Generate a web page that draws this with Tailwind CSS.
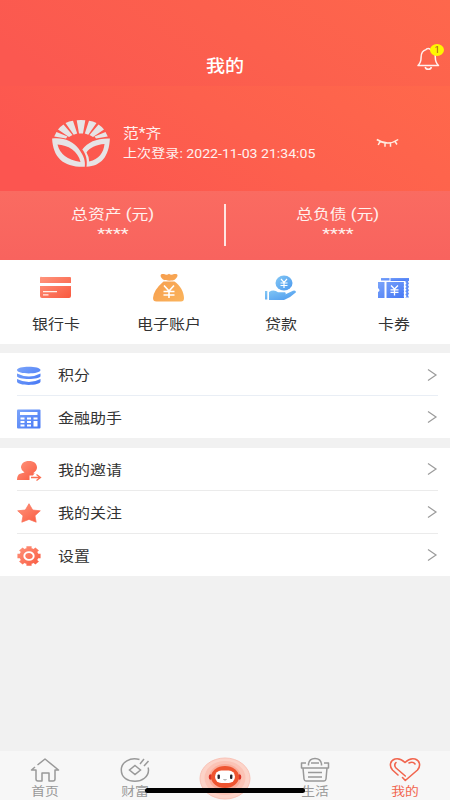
<!DOCTYPE html>
<html lang="zh-CN">
<head>
<meta charset="utf-8">
<title>我的</title>
<script src="https://cdn.jsdelivr.net/npm/@tailwindcss/browser@4"></script>
</head>
<body class="w-[450px] h-[800px] overflow-hidden bg-[#f1f1f1] text-[#333] font-['Roboto','Noto_Sans_CJK_SC',sans-serif] text-[14px] leading-5">
<svg class="absolute w-0 h-0"><defs>
<linearGradient id="red" x1="0" y1="0" x2="1" y2="1"><stop stop-color="#ff957d"/><stop offset="1" stop-color="#f9593f"/></linearGradient>
<linearGradient id="gold" x1="0" y1="0" x2="1" y2="1"><stop stop-color="#f59b4c"/><stop offset="1" stop-color="#fbb45c"/></linearGradient>
<linearGradient id="sky" x1="0" y1="0" x2="1" y2="1"><stop stop-color="#83c8f5"/><stop offset="1" stop-color="#4b98ee"/></linearGradient>
<linearGradient id="blue" x1="0" y1="0" x2="1" y2="1"><stop stop-color="#7ba4fa"/><stop offset="1" stop-color="#4678f5"/></linearGradient>
<linearGradient id="gear" gradientUnits="userSpaceOnUse" x1="-10" y1="-10" x2="10" y2="10"><stop stop-color="#ff957d"/><stop offset="1" stop-color="#f9593f"/></linearGradient>
</defs></svg>
<div class="flex flex-col h-full">
  <header class="relative h-[86px] shrink-0 bg-linear-[35deg,#fb5850_10%,#fc604d_55%,#fe674c] flex items-end justify-center pb-[8px] text-white">
    <h1 class="text-[17px] leading-[24px] font-medium scale-x-[1.12]">我的</h1>
    <svg class="absolute left-[415px] top-[43px]" width="32" height="30" fill="none">
      <path d="M3 22.5h20.5c-2.6-2.4-3.2-4.3-3.2-8.2 0-4.4-2-7-5-7.7-.4-1.5-3.7-1.5-4.2 0-3 .8-5 3.300-5 7.700 0 3.900-.5 5.800-3.100 8.200Z" stroke="#fff0ee" stroke-width="1.5" stroke-linejoin="round"/>
      <path d="M10.2 24c.6 3 5.6 3 6.2 0" stroke="#fff0ee" stroke-width="1.5"/>
    </svg>
    <span class="absolute left-[430px] top-[44px] w-[14px] h-[12px] rounded-[50%] bg-[#fff500] text-[#a34b2c] text-[9px] leading-[12px] text-center">1</span>
  </header>
  <section class="h-[105px] shrink-0 bg-linear-[35deg,#fc5550_10%,#fd604d_55%,#ff684b] flex pl-[51px] text-[#fff1ef]">
    <svg class="mt-[32px] shrink-0" width="60" height="50" viewBox="0 0 60 50" fill="#e6e4e5">
      <path d="M25.700 2.200Q30 1.600 34.300 2.200L32 15.500h-4ZM14.500 5q3.500-2 7.500-2.300L26.200 15.500l-3.500 1.200ZM45.500 5q-3.500-2-7.500-2.300L33.800 15.500l3.500 1.200ZM7 11.500q2.300-3 5.500-5L21.500 17l-3.500 2ZM53 11.500q-2.300-3-5.500-5L38.500 17l3.500 2ZM3.200 18.500l2.300-4.500 11 4.500-1.500 2ZM56.800 18.500l-2.300-4.500-11 4.500 1.500 2Z"/>
      <path fill-rule="evenodd" d="M1.100 20.500C12 19 22 23 27.500 30.500 33 38 34.500 43 33.800 48.800 13 49.500 2 40 1.100 20.500ZM6.500 26.500Q10 41 29.500 44C27 33 17 27 6.500 26.500Z"/>
      <path fill-rule="evenodd" d="M58.900 20.500C58 39 50 48 35.500 48.800 36.500 42 35 36 31.300 31.500 37 24 46 20 58.900 20.500ZM53.500 26C45 26.500 38.500 30 35.500 34.500q2.500 4 2.700 9C48 41 52.500 35 53.500 26Z"/>
    </svg>
    <div class="ml-[12px] mt-[38px] w-[200px]">
      <div class="text-[14px] leading-[19px] origin-left scale-x-[1.120]">范*齐</div>
      <div class="text-[12px] leading-[20px] pt-px origin-left scale-x-[1.175] whitespace-nowrap w-[170px]">上次登录: 2022-11-03 21:34:05</div>
    </div>
    <svg class="ml-[53px] mt-[51px]" width="24" height="14" viewBox="0 0 24 14" fill="none" stroke="#ffece0" stroke-width="1.500"><path d="M.8 2.500Q12 9.500 22.200 2.500M4 4.600 2.200 8M9 6.200v3.600M14.500 6.200v3.600M19 4.500l2 3"/></svg>
  </section>
  <section class="relative h-[69px] shrink-0 bg-linear-to-b from-[#fa6b61] to-[#f8635e] grid grid-cols-2 text-center text-[#fff1ee]">
    <div class="pt-[13px] flex flex-col items-center"><div class="text-[14px] leading-[20px] scale-x-[1.200]">总资产 (元)</div><div class="text-[15px] leading-[21px] scale-x-[1.220]">****</div></div>
    <div class="pt-[13px] flex flex-col items-center"><div class="text-[14px] leading-[20px] scale-x-[1.200]">总负债 (元)</div><div class="text-[15px] leading-[21px] scale-x-[1.220]">****</div></div>
    <div class="absolute left-[224px] top-[13px] w-[1.500px] h-[42px] bg-[#ffe5e2]"></div>
  </section>
  <nav class="h-[84px] shrink-0 bg-white grid grid-cols-4 text-center">
    <div class="flex flex-col items-center pt-[12px]">
      <svg width="34" height="32" viewBox="0 0 34 32"><path d="M3 5h28q1 0 1 1v5H1V6q0-2 2-1ZM1 14h31v10q0 2-2 2H3q-2 0-2-2Z" fill="url(#red)"/><path d="M4 19.600h14M4 22.800h5.500" stroke="#fff1e9" stroke-width="1.200"/></svg>
      <span class="mt-[10px] scale-x-[1.140]">银行卡</span>
    </div>
    <div class="flex flex-col items-center pt-[12px]">
      <svg width="34" height="32" viewBox="0 0 34 32"><path fill="url(#gold)" d="M11 7.500C7 3.500 8.500 1.500 12 2q3 1.500 5-.3Q19 3.500 22 2c4-.5 5 1.500 1 5.500-2 1.600-9 1.600-12 0ZM11.500 9.500h11C28 13 32 20 32 26q0 3.500-3 3.500H4.500Q1 29.500 1 26 1.500 18 11.500 9.500Z"/><path d="m12 13.500 5 5.500 5-5.500M11.500 19.500h11M11.500 23h11M17 18.500V26" fill="none" stroke="#fff" stroke-width="1.600"/></svg>
      <span class="mt-[10px] scale-x-[1.140]">电子账户</span>
    </div>
    <div class="flex flex-col items-center pt-[12px]">
      <svg width="34" height="32" viewBox="0 0 34 32"><g fill="url(#sky)"><ellipse cx="20" cy="11" rx="8.500" ry="7.600"/><path d="M5 20Q10 17 14 20.300h7q2 1.700-1 2.700l9-4.300q3-.7 3 1.600-5 5-12 7.700H5ZM1 19h2.300v8.500H1Z"/></g><path d="m17 7 3 3.300L23 7M16.500 11h7M16.500 13.500h7M20 10.500V16" fill="none" stroke="#fff" stroke-width="1.200"/></svg>
      <span class="mt-[10px] scale-x-[1.140]">贷款</span>
    </div>
    <div class="flex flex-col items-center pt-[12px]">
      <svg width="34" height="32" viewBox="0 0 34 32"><g fill="url(#blue)"><path d="M4 6h8.500v2.500H4ZM13.500 6H32v3H13.500Z"/><path d="M1 10h6.500v16H1v-6q3-1.500 0-4ZM9.500 10H27v16H9.500Z"/></g><path fill="#5e8df7" d="M28.500 8H32l-1 1.700 1 1.700-1 1.700 1 1.700-1 1.700 1 1.700-1 1.700 1 1.700-1 1.700 1 2.200h-3.500Z"/><path d="M28 10.500v16" stroke="#fff" stroke-width="2.400" stroke-dasharray="1.700 1.500"/><path d="m14 13.500 3.500 3.500 3.500-3.500M13.500 17.800h8M13.500 20.300h8M17.500 17v6.500" fill="none" stroke="#fff" stroke-width="1.300"/></svg>
      <span class="mt-[10px] scale-x-[1.140]">卡券</span>
    </div>
  </nav>
  <section class="mt-[9px] h-[85px] shrink-0 bg-white px-[12px] pl-[17px]">
    <div class="h-[43px] border-b border-[#e9eef5] flex items-center">
      <svg class="mt-[3px]" width="24" height="22" viewBox="0 0 24 22" fill="url(#blue)"><path d="M0 5C0 .5 23.500.500 23.500 5S0 9.500 0 5ZM0 8.500q12 6 23.500 0V11C23.500 15 0 15 0 11ZM0 14q12 6 23.500 0v2.500c0 4.500-23.500 4.500-23.500 0Z"/></svg>
      <span class="ml-[17px] mt-[2px] origin-left scale-x-[1.140]">积分</span>
      <svg class="ml-auto mt-px" width="11" height="14" fill="none" stroke="#9b9b9b" stroke-width="1.200"><path d="m1 1.500 8 5.500-8 5.500"/></svg>
    </div>
    <div class="h-[42px] flex items-center">
      <svg class="mt-[3px]" width="24" height="20" viewBox="0 0 24 20"><rect width="23.500" height="19" y=".5" rx="1" fill="url(#blue)"/><path fill="#fff" d="M3 3h17.500v3H3ZM3.500 8.500h4v2h-4ZM10 8.500h4v2h-4ZM16.500 8.500h4v2h-4ZM3.500 12h4v2h-4ZM10 12h4v2h-4ZM3.500 15.500h4v2h-4ZM10 15.500h4v2h-4ZM16.500 12h4v5.500h-4Z"/></svg>
      <span class="ml-[17px] mt-[2px] origin-left scale-x-[1.140]">金融助手</span>
      <svg class="ml-auto" width="11" height="14" fill="none" stroke="#9b9b9b" stroke-width="1.200"><path d="m1 1.500 8 5.500-8 5.500"/></svg>
    </div>
  </section>
  <section class="mt-[10px] h-[128px] shrink-0 bg-white px-[12px] pl-[17px]">
    <div class="h-[43px] border-b border-[#ebebeb] flex items-center">
      <svg class="mt-[4px]" width="25" height="20" viewBox="0 0 25 20"><path fill="url(#red)" d="M12 0C17 0 20 2.700 20 6.500q0 3-3.800 5.700l2.300.8h-1.500l-1 1.500h-3.500v4.500H0q0-5 3-6.200l4.500-1.300Q4 9 4 6.500C4 2.700 7 0 12 0Z"/><path d="M14 16.500h9M19.500 13.500l4 3-4 3" fill="none" stroke="#fb6e51" stroke-width="1.300"/></svg>
      <span class="ml-[16px] mt-[2px] origin-left scale-x-[1.140]">我的邀请</span>
      <svg class="ml-auto" width="11" height="14" fill="none" stroke="#9b9b9b" stroke-width="1.200"><path d="m1 1.500 8 5.500-8 5.500"/></svg>
    </div>
    <div class="h-[43px] border-b border-[#ebebeb] flex items-center">
      <svg class="mt-[2px]" width="24" height="20" viewBox="0 0 24 20"><path fill="url(#red)" stroke="#fb735a" stroke-width=".7" stroke-linejoin="round" d="m12 .7 3.700 6.300 7.600.8-5.300 4.900 1.200 6.500L12 16.400 4.800 19.200 6 12.700.7 7.800l7.600-.8Z"/></svg>
      <span class="ml-[17px] mt-[1px] origin-left scale-x-[1.140]">我的关注</span>
      <svg class="ml-auto" width="11" height="14" fill="none" stroke="#9b9b9b" stroke-width="1.200"><path d="m1 1.500 8 5.500-8 5.500"/></svg>
    </div>
    <div class="h-[42px] flex items-center">
      <svg class="mt-[1px]" width="24" height="20" viewBox="-12 -10 24 20">
        <g transform="scale(1.180 1)" fill="url(#gear)"><circle r="8.100"/>
        <path d="M-2.200-9.800h4.400v3h-4.400ZM-2.200 9.800h4.400v-3h-4.400ZM-9.800-2.200v4.400h3v-4.400ZM9.800-2.200v4.400h-3v-4.400Z"/><path d="m-8.400-5.400 3-3 2 2-3 3ZM8.400-5.400l-3-3-2 2 3 3ZM-8.400 5.400l3 3 2-2-3-3ZM8.400 5.400l-3 3-2-2 3-3Z"/></g>
        <ellipse rx="4.700" ry="3.900" fill="none" stroke="#fff" stroke-width="1.900"/>
      </svg>
      <span class="ml-[17px] mt-px origin-left scale-x-[1.140]">设置</span>
      <svg class="ml-auto" width="11" height="14" fill="none" stroke="#9b9b9b" stroke-width="1.200"><path d="m1 1.500 8 5.500-8 5.500"/></svg>
    </div>
  </section>
  <footer class="relative mt-auto h-[49px] shrink-0 bg-[#f7f7f7] grid grid-cols-5 text-center text-[#999] text-[12px] leading-[18px]">
    <div class="flex flex-col items-center pt-[6px]">
      <svg width="30" height="26" viewBox="0 0 30 26" fill="none" stroke="#999" stroke-width="1.500" stroke-linejoin="round"><path d="M7.500 8 15 2l13.500 11H25v9q0 2-2 2h-4v-8h-7v8H8q-2 0-2-2v-9H1.500L5 10"/></svg>
      <span class="scale-x-[1.150]">首页</span>
    </div>
    <div class="flex flex-col items-center pt-[6px]">
      <svg width="30" height="26" viewBox="0 0 30 26" fill="none" stroke="#999" stroke-width="1.500"><path d="M19.500 2.500C10 0 1.300 5 1.300 13S8 24.300 15 24.300 28.500 20 28.500 13q0-1.500-.5-2.500M15 8.500l5.500 4.500-5.500 4.500L9.500 13ZM20 7l4-5M24 9l4.500-5"/></svg>
      <span class="scale-x-[1.150]">财富</span>
    </div>
    <div></div>
    <div class="flex flex-col items-center pt-[6px]">
      <svg width="30" height="26" viewBox="0 0 30 26" fill="none" stroke="#999" stroke-width="1.500" stroke-linejoin="round"><path d="M6 6H1.500v5H3L4 22q.3 2 2 2h18q1.700 0 2-2l1-11h1.500V6H24M3 11h24M8.500 8.500V7c1-7.500 12-7.500 13 0v1.500M11 6h8M8 15.500h14M8 20h14"/></svg>
      <span class="scale-x-[1.150]">生活</span>
    </div>
    <div class="flex flex-col items-center pt-[6px] text-[#f1654e]">
      <svg width="32" height="26" viewBox="0 0 32 26" fill="none" stroke="#f1654e" stroke-width="1.600" stroke-linejoin="round" stroke-linecap="round"><path d="m13.500 20.500 2.800 3L28.500 13C32 9 31 3.500 26 2c-4-1-7 .5-10 3.500C13 2.500 10 1 6 2 1 3.500 0 9 3.500 13l5.500 5M16.300 19 7 11q-2.500-3 0-5.500M20 6q4-2 6 1"/></svg>
      <span class="scale-x-[1.150]">我的</span>
    </div>
    <svg class="absolute left-[199px] top-[6px]" width="52" height="43" viewBox="0 0 52 43">
      <ellipse cx="26" cy="21.500" rx="25" ry="20.500" fill="#fcd3c8" stroke="#f9c2b6"/><ellipse cx="26" cy="21" rx="20.500" ry="17" fill="#fbc3b5"/><ellipse cx="26" cy="20.500" rx="16" ry="13.500" fill="#faae9c"/>
      <ellipse cx="11.500" cy="20" rx="1.800" ry="2.800" fill="#da3327"/><ellipse cx="40.500" cy="20" rx="1.800" ry="2.800" fill="#da3327"/>
      <ellipse cx="26" cy="20" rx="14" ry="11" fill="#ee5430"/><rect x="16" y="13.500" width="20" height="12.500" rx="6.250" fill="#fff"/>
      <rect x="18.500" y="17.500" width="2.400" height="4.500" rx="1" fill="#252632"/><rect x="31" y="17.500" width="2.400" height="4.500" rx="1" fill="#252632"/>
      <path d="M24.500 22.500q1.500 1 3 0" fill="none" stroke="#777" stroke-width=".8"/>
    </svg>
    <div class="absolute left-[145px] top-[36.500px] w-[160px] h-[5px] rounded-full bg-black"></div>
  </footer>
</div>
</body>
</html>
